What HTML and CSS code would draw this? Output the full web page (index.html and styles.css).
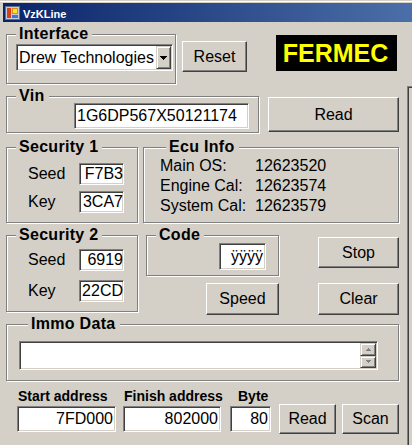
FILE: index.html
```html
<!DOCTYPE html>
<html>
<head>
<meta charset="utf-8">
<title>VzKLine</title>
<link rel="stylesheet" href="styles.css">
</head>
<body>
<div class="window">
  <div class="caption-wrap">
    <div class="titlebar">
      <svg class="app-icon" width="16" height="16" viewBox="0 0 16 16" shape-rendering="crispEdges">
        <rect x="0" y="1" width="15" height="14" fill="#5a6f8c"/>
        <rect x="1" y="2" width="13" height="12" fill="#c8ccd4"/>
        <rect x="2" y="3" width="4" height="10" fill="#d8401c"/>
        <rect x="7" y="3" width="6" height="6" fill="#e08a10"/>
        <rect x="8" y="4" width="4" height="4" fill="#ffe030"/>
        <rect x="7" y="10" width="6" height="3" fill="#3a78d8"/>
      </svg>
      <span class="title">VzKLine</span>
    </div>
  </div>
  <div class="client">
    <div class="form">
      <div class="row row-1">
        <fieldset class="group g-interface">
          <legend>Interface</legend>
          <div class="combo">
            <span class="combo-text">Drew Technologies</span>
            <span class="combo-btn">
              <svg width="7" height="4" viewBox="0 0 7 4" shape-rendering="crispEdges">
                <rect x="0" y="0" width="7" height="1" fill="#000"/>
                <rect x="1" y="1" width="5" height="1" fill="#000"/>
                <rect x="2" y="2" width="3" height="1" fill="#000"/>
                <rect x="3" y="3" width="1" height="1" fill="#000"/>
              </svg>
            </span>
          </div>
        </fieldset>
        <button class="btn btn-reset">Reset</button>
        <div class="brand">FERMEC</div>
      </div>

      <div class="row row-2">
        <fieldset class="group g-vin">
          <legend>Vin</legend>
          <div class="field f-vin">1G6DP567X50121174</div>
        </fieldset>
        <button class="btn btn-read">Read</button>
      </div>

      <div class="row row-3">
        <fieldset class="group g-sec g-sec1">
          <legend>Security 1</legend>
          <div class="kv">
            <span class="kv-label">Seed</span>
            <div class="field small right">F7B3</div>
          </div>
          <div class="kv">
            <span class="kv-label">Key</span>
            <div class="field small right">3CA7</div>
          </div>
        </fieldset>
        <fieldset class="group g-ecu">
          <legend>Ecu Info</legend>
          <div class="ecu-line"><span class="ecu-label">Main OS:</span><span>12623520</span></div>
          <div class="ecu-line"><span class="ecu-label">Engine Cal:</span><span>12623574</span></div>
          <div class="ecu-line"><span class="ecu-label">System Cal:</span><span>12623579</span></div>
        </fieldset>
      </div>

      <div class="row row-4">
        <fieldset class="group g-sec g-sec2">
          <legend>Security 2</legend>
          <div class="kv">
            <span class="kv-label">Seed</span>
            <div class="field small right">6919</div>
          </div>
          <div class="kv">
            <span class="kv-label">Key</span>
            <div class="field small right">22CD</div>
          </div>
        </fieldset>
        <div class="controls">
          <fieldset class="group g-code">
            <legend>Code</legend>
            <div class="field f-code right">ÿÿÿÿ</div>
          </fieldset>
          <button class="btn btn-stop">Stop</button>
          <button class="btn btn-speed">Speed</button>
          <button class="btn btn-clear">Clear</button>
        </div>
      </div>

      <div class="row row-5">
        <fieldset class="group g-immo">
          <legend>Immo Data</legend>
          <div class="memo">
            <div class="memo-text"></div>
            <div class="memo-scroll">
              <span class="sbtn">
                <svg width="5" height="3" viewBox="0 0 5 3" shape-rendering="crispEdges">
                  <rect x="2" y="0" width="1" height="1" fill="#808080"/>
                  <rect x="1" y="1" width="3" height="1" fill="#808080"/>
                  <rect x="0" y="2" width="5" height="1" fill="#808080"/>
                </svg>
              </span>
              <span class="sbtn">
                <svg width="5" height="3" viewBox="0 0 5 3" shape-rendering="crispEdges">
                  <rect x="0" y="0" width="5" height="1" fill="#808080"/>
                  <rect x="1" y="1" width="3" height="1" fill="#808080"/>
                  <rect x="2" y="2" width="1" height="1" fill="#808080"/>
                </svg>
              </span>
            </div>
          </div>
        </fieldset>
      </div>

      <div class="row addr-row">
        <div class="addr-col col-start">
          <span class="addr-label">Start address</span>
          <div class="field addr right">7FD000</div>
        </div>
        <div class="addr-col col-finish">
          <span class="addr-label">Finish address</span>
          <div class="field addr right">802000</div>
        </div>
        <div class="addr-col col-byte">
          <span class="addr-label byte-label">Byte</span>
          <div class="field addr right">80</div>
        </div>
        <button class="btn btn-small btn-read2">Read</button>
        <button class="btn btn-small btn-scan">Scan</button>
      </div>
    </div>
    <div class="side"></div>
  </div>
</div>
</body>
</html>
```

FILE: styles.css
```css
* {
  box-sizing: border-box;
}

html,
body {
  margin: 0;
  padding: 0;
}

body {
  width: 412px;
  height: 445px;
  overflow: hidden;
  background: #d4d0c8;
  font-family: "Liberation Sans", Arial, sans-serif;
  font-size: 16px;
  color: #000;
}

.window {
  height: 445px;
}

/* ---------- caption ---------- */
.caption-wrap {
  border-top: 1px solid #d4d0c8;
  padding: 2px 0 0 3px;
  box-shadow: inset 0 1px 0 #fff;
}

.titlebar {
  height: 19px;
  display: flex;
  align-items: center;
  padding-left: 2px;
  gap: 2px;
  background: linear-gradient(to right, #0a246a 0%, #4b6fa8 100%);
}

.app-icon {
  display: block;
  flex: none;
}

.title {
  color: #fff;
  font-weight: bold;
  font-size: 11px;
  margin-top: 2px;
}

/* ---------- client ---------- */
.client {
  display: flex;
}

.form {
  width: 407px;
  flex: none;
  padding-top: 4px;
}

.side {
  flex: 1;
  height: 359px;
  margin-top: 64px;
  border-top: 1px solid #808080;
  border-left: 1px solid #808080;
  box-shadow: inset 1px 1px 0 #404040;
}

.row {
  display: flex;
  align-items: flex-start;
}

/* ---------- group boxes ---------- */
.group {
  margin: 0 0 0 6px;
  padding: 0;
  min-width: 0;
  border: 1px solid #808080;
  box-shadow: inset 1px 1px 0 #fff, 1px 1px 0 #fff;
}

.group legend {
  margin-left: 9px;
  padding: 0 4px 0 3px;
  font-weight: bold;
  line-height: 16px;
  letter-spacing: 0.3px;
  background: #d4d0c8;
}

/* ---------- 3D controls ---------- */
.btn {
  display: flex;
  align-items: center;
  justify-content: center;
  padding: 0;
  font-family: inherit;
  font-size: 16px;
  color: #000;
  background: #d4d0c8;
  border: 1px solid;
  border-color: #fff #404040 #404040 #fff;
  box-shadow: inset -1px -1px 0 #808080;
  border-radius: 0;
  flex: none;
}

.field {
  display: flex;
  align-items: center;
  padding: 0 1px;
  white-space: nowrap;
  background: #fff;
  border: 1px solid;
  border-color: #808080 #fff #fff #808080;
  box-shadow: inset 1px 1px 0 #404040, inset -1px -1px 0 #d4d0c8;
  flex: none;
}

.field.right {
  justify-content: flex-end;
  padding-right: 2px;
}

/* ---------- row 1 ---------- */
.g-interface {
  width: 170px;
}

.combo {
  display: flex;
  width: 157px;
  height: 27px;
  margin: 2px 0 12px 9px;
  background: #fff;
  border: 1px solid;
  border-color: #808080 #fff #fff #808080;
  box-shadow: inset 1px 1px 0 #404040, inset -1px -1px 0 #d4d0c8;
  padding: 1px;
}

.combo-text {
  flex: 1;
  display: flex;
  align-items: center;
  padding-left: 1px;
  white-space: nowrap;
}

.combo-btn {
  width: 15px;
  display: flex;
  align-items: center;
  justify-content: center;
  padding-top: 1px;
  background: #d4d0c8;
  border: 1px solid;
  border-color: #d4d0c8 #404040 #404040 #d4d0c8;
  box-shadow: inset 1px 1px 0 #fff, inset -1px -1px 0 #808080;
}

.combo-btn svg {
  display: block;
}

.btn-reset {
  width: 65px;
  height: 31px;
  margin: 15px 0 0 6px;
}

.brand {
  width: 121px;
  height: 36px;
  margin: 9px 0 0 29px;
  display: flex;
  align-items: center;
  justify-content: center;
  padding-right: 2px;
  background: #000;
  color: #ffff00;
  font-weight: bold;
  font-size: 25px;
}

/* ---------- row 2 ---------- */
.row-2 {
  margin-top: 4px;
}

.g-vin {
  width: 253px;
}

.f-vin {
  width: 175px;
  height: 26px;
  margin: -1px 0 3px 67px;
  padding-left: 2px;
}

.btn-read {
  width: 131px;
  height: 35px;
  margin: 9px 0 0 9px;
}

/* ---------- row 3 ---------- */
.row-3 {
  margin-top: 6px;
  align-items: stretch;
}

.g-sec {
  width: 132px;
}

.g-sec1 {
  padding: 8px 0 9px 0;
}

.g-sec1 .kv + .kv {
  margin-top: 6px;
}

.kv {
  display: flex;
  align-items: center;
  height: 22px;
  padding-left: 21px;
}

.kv-label {
  width: 51px;
  flex: none;
}

.field.small {
  width: 45px;
  height: 22px;
  padding-right: 0;
}

.g-ecu {
  width: 256px;
  margin-left: 5px;
  padding: 1px 0 0 16px;
}

.g-ecu legend {
  margin-left: 6px;
}

.ecu-line {
  display: flex;
  line-height: 20px;
  white-space: nowrap;
}

.ecu-label {
  width: 95px;
  flex: none;
}

/* ---------- row 4 ---------- */
.row-4 {
  margin-top: 4px;
}

.g-sec2 {
  padding: 6px 0 9px 0;
}

.g-sec2 .kv + .kv {
  margin-top: 9px;
}

.controls {
  margin-left: 8px;
  display: grid;
  grid-template-columns: 133px 81px;
  column-gap: 39px;
  row-gap: 7px;
  align-items: start;
}

.g-code {
  margin-left: 0;
  padding: 0 0 5px 0;
}

.g-code legend {
  margin-left: 9px;
}

.f-code {
  width: 47px;
  height: 27px;
  margin-left: 72px;
}

.btn-stop {
  width: 81px;
  height: 31px;
  margin-top: 10px;
}

.btn-speed {
  width: 73px;
  height: 32px;
  justify-self: end;
}

.btn-clear {
  width: 81px;
  height: 32px;
}

/* ---------- row 5 ---------- */
.row-5 {
  margin-top: 1px;
}

.g-immo {
  width: 393px;
  padding: 9px 0 10px 12px;
}

.memo {
  display: flex;
  width: 359px;
  height: 29px;
  background: #fff;
  border: 1px solid;
  border-color: #808080 #fff #fff #808080;
  box-shadow: inset 1px 1px 0 #404040, inset -1px -1px 0 #d4d0c8;
  padding: 1px 1px 1px 1px;
}

.memo-text {
  flex: 1;
}

.memo-scroll {
  width: 16px;
  display: flex;
  flex-direction: column;
}

.sbtn {
  flex: 1;
  display: flex;
  align-items: center;
  justify-content: center;
  background: #d4d0c8;
  border: 1px solid;
  border-color: #d4d0c8 #404040 #404040 #d4d0c8;
  box-shadow: inset 1px 1px 0 #fff, inset -1px -1px 0 #808080;
}

.sbtn svg {
  display: block;
}

/* ---------- address row ---------- */
.addr-row {
  margin-top: 7px;
  padding-left: 17px;
  align-items: flex-end;
}

.addr-col {
  display: flex;
  flex-direction: column;
  flex: none;
}

.addr-label {
  font-weight: bold;
  font-size: 14px;
  line-height: 16px;
  padding-left: 1px;
  white-space: nowrap;
}

.byte-label {
  padding-left: 8px;
}

.field.addr {
  height: 26px;
  margin-top: 2px;
}

.col-start {
  width: 99px;
}

.col-finish {
  width: 98px;
  margin-left: 7px;
}

.col-byte {
  width: 41px;
  margin-left: 9px;
}

.btn-small {
  width: 57px;
  height: 30px;
  margin-bottom: -2px;
}

.btn-read2 {
  margin-left: 8px;
}

.btn-scan {
  margin-left: 6px;
}
```
